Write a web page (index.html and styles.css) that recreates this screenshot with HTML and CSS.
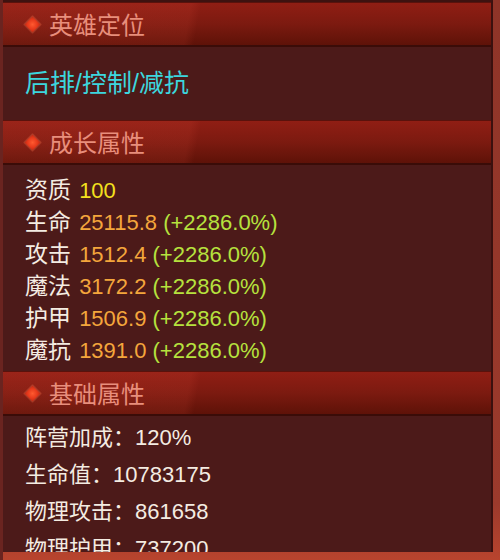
FILE: index.html
```html
<!DOCTYPE html>
<html lang="zh-CN">
<head>
<meta charset="utf-8">
<link rel="stylesheet" href="styles.css">
</head>
<body>
<div class="frame">
  <div class="panel">
    <div class="header"><span class="diamond"></span><span class="title">英雄定位</span></div>
    <div class="pos">后排/控制/减抗</div>

    <div class="header"><span class="diamond"></span><span class="title">成长属性</span></div>
    <div class="growth">
      <div class="row"><span class="lbl">资质</span> <span class="yel">100</span></div>
      <div class="row"><span class="lbl">生命</span> <span class="org">25115.8</span> <span class="grn">(+2286.0%)</span></div>
      <div class="row"><span class="lbl">攻击</span> <span class="org">1512.4</span> <span class="grn">(+2286.0%)</span></div>
      <div class="row"><span class="lbl">魔法</span> <span class="org">3172.2</span> <span class="grn">(+2286.0%)</span></div>
      <div class="row"><span class="lbl">护甲</span> <span class="org">1506.9</span> <span class="grn">(+2286.0%)</span></div>
      <div class="row"><span class="lbl">魔抗</span> <span class="org">1391.0</span> <span class="grn">(+2286.0%)</span></div>
    </div>

    <div class="header"><span class="diamond"></span><span class="title">基础属性</span></div>
    <div class="base">
      <div class="brow">阵营加成：120%</div>
      <div class="brow">生命值：10783175</div>
      <div class="brow">物理攻击：861658</div>
      <div class="brow">物理护甲：737200</div>
    </div>
  </div>
</div>
</body>
</html>
```

FILE: styles.css
```css
html, body {
  margin: 0;
  padding: 0;
  background: #a63c2c;
}
.frame {
  width: 500px;
  height: 560px;
  background: linear-gradient(180deg, #8e3428 0%, #9c3a2c 90%, #b8442e 100%);
  border-left: 3px solid #6a2420;
  box-sizing: border-box;
  overflow: hidden;
}
.panel {
  width: 490px;
  height: 552px;
  background: #4c1a19;
  border-top: 2px solid #3e1210;
  border-right: 2px solid #3a100e;
  box-sizing: border-box;
  overflow: hidden;
  font-family: "Liberation Sans", "Noto Sans CJK SC", sans-serif;
}
.header {
  height: 45px;
  box-sizing: border-box;
  display: flex;
  align-items: center;
  padding-left: 22px;
  gap: 9px;
  border-top: 1px solid #5a120c;
  border-bottom: 2px solid #3a0c08;
  background:
    linear-gradient(100deg, rgba(255, 90, 70, 0.10) 0%, rgba(255, 90, 70, 0.10) 38%, rgba(255, 90, 70, 0) 40%),
    linear-gradient(180deg, #901e14 0%, #7c1a10 50%, #5e1208 100%);
}
.diamond {
  width: 11px;
  height: 11px;
  margin: 0 2px;
  transform: rotate(45deg);
  background: radial-gradient(circle at 50% 50%, #ff5a30 0%, #e83a1c 60%, #c42a14 100%);
  box-shadow: 0 0 1px 1px rgba(255, 120, 80, 0.35);
}
.title {
  font-size: 24px;
  line-height: 30px;
  color: #e88e7c;
  font-family: "Noto Sans CJK SC", sans-serif;
}
.pos {
  height: 73px;
  box-sizing: border-box;
  padding: 21px 0 0 22px;
  font-size: 25px;
  line-height: 30px;
  color: #3cd6de;
}
.growth {
  height: 206px;
  box-sizing: border-box;
  padding: 9px 0 0 22px;
  font-size: 22px;
}
.row {
  height: 32px;
  line-height: 32px;
  white-space: nowrap;
}
.lbl {
  color: #f4ece2;
  font-size: 23px;
  margin-right: 2px;
}
.yel { color: #f4e01e; }
.org { color: #f4a63c; }
.grn { color: #b6e23e; }
.base {
  padding: 3px 0 0 22px;
  font-size: 22px;
}
.brow {
  height: 37px;
  line-height: 37px;
  color: #f4ece2;
  white-space: nowrap;
}
```
